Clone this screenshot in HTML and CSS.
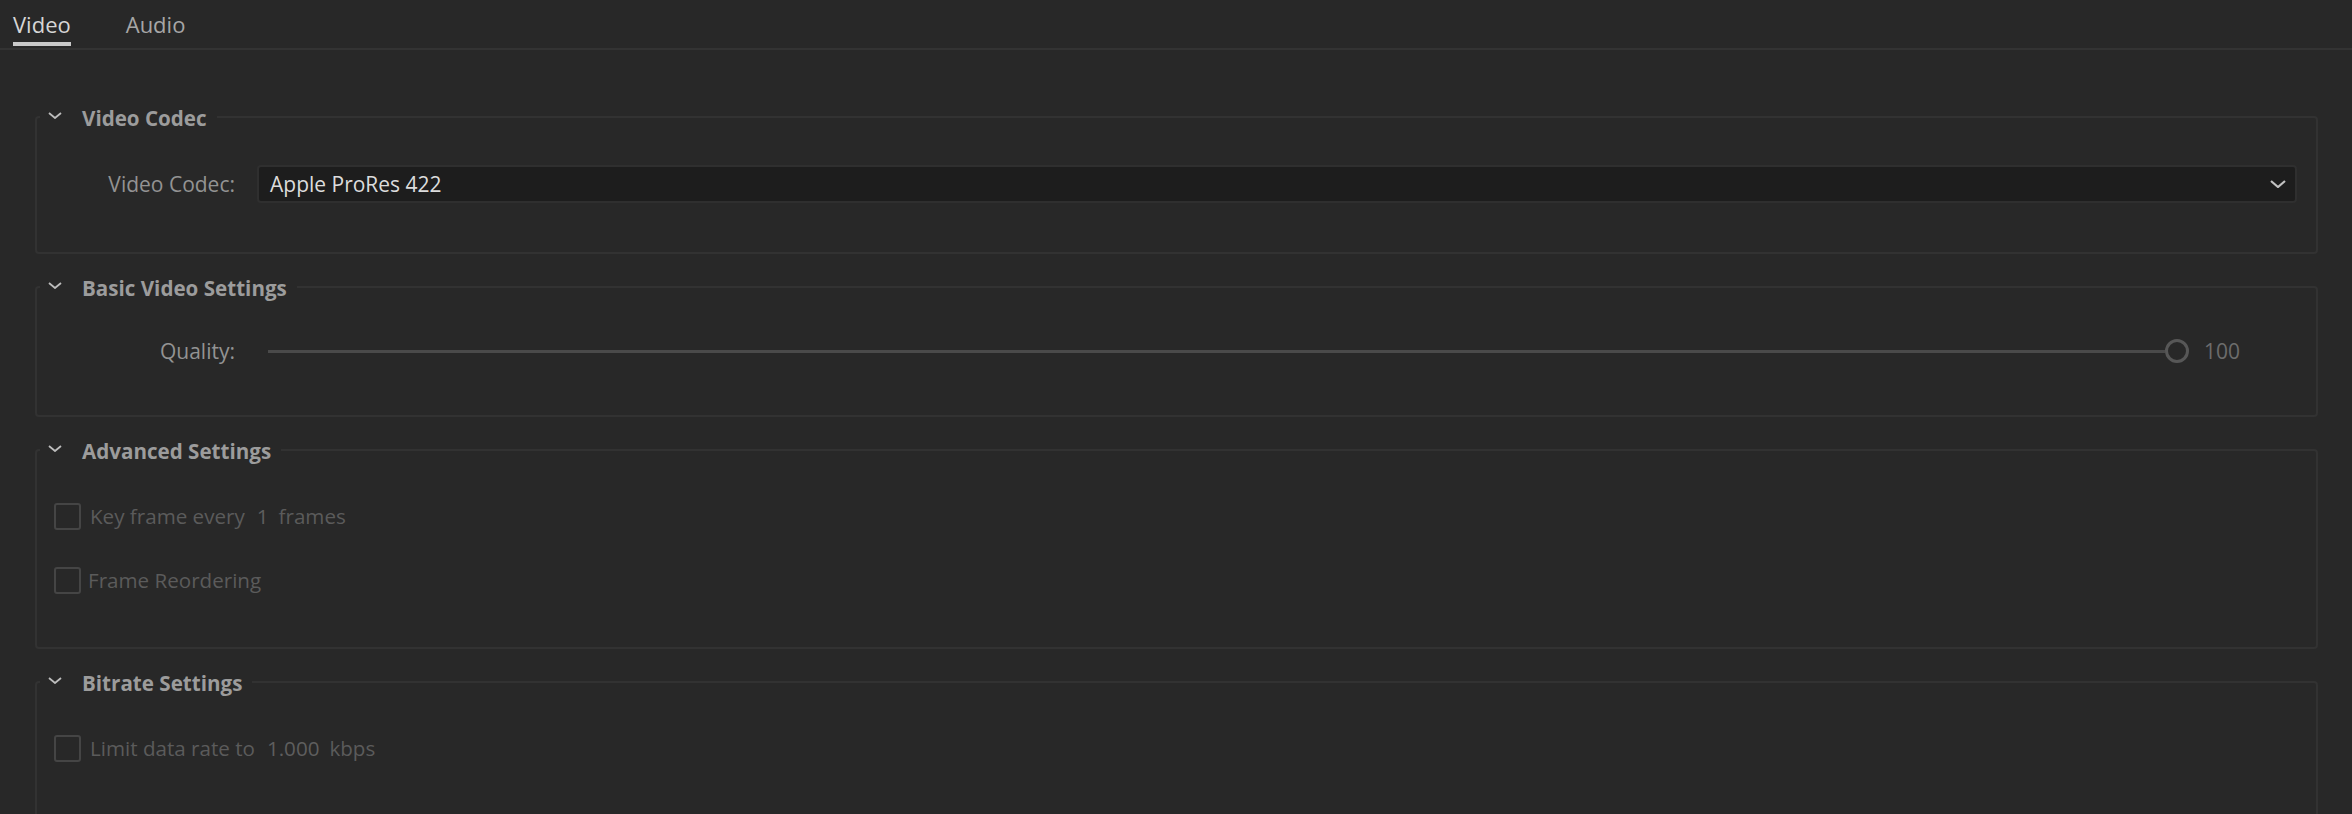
FILE: index.html
```html
<!DOCTYPE html>
<html lang="en">
<head>
<meta charset="utf-8">
<title>Export Settings</title>
<link rel="stylesheet" href="styles.css">
</head>
<body>
<div class="panel">
  <nav class="tabs">
    <div class="tab active">Video</div>
    <div class="tab">Audio</div>
  </nav>
  <div class="content">
    <fieldset class="group g-codec">
      <legend class="group-title">
        <svg class="chev" viewBox="0 0 14 7" width="14" height="7"><path d="M1 1 L7 6 L13 1" /></svg>
        <span>Video Codec</span>
      </legend>
      <div class="field-row">
        <label class="field-label">Video Codec:</label>
        <div class="select">
          <span class="select-value">Apple ProRes 422</span>
          <svg class="select-chev" viewBox="0 0 16 8" width="16" height="8"><path d="M1 1 L8 7 L15 1" /></svg>
        </div>
      </div>
    </fieldset>

    <fieldset class="group g-basic">
      <legend class="group-title">
        <svg class="chev" viewBox="0 0 14 7" width="14" height="7"><path d="M1 1 L7 6 L13 1" /></svg>
        <span>Basic Video Settings</span>
      </legend>
      <div class="field-row slider-row">
        <label class="field-label">Quality:</label>
        <div class="slider">
          <div class="track"></div>
          <div class="thumb"></div>
          <span class="slider-value">100</span>
        </div>
      </div>
    </fieldset>

    <fieldset class="group g-advanced">
      <legend class="group-title">
        <svg class="chev" viewBox="0 0 14 7" width="14" height="7"><path d="M1 1 L7 6 L13 1" /></svg>
        <span>Advanced Settings</span>
      </legend>
      <div class="check-list">
        <div class="check-row">
          <span class="checkbox"></span>
          <span class="check-text">Key frame every</span>
          <span class="num">1</span>
          <span class="unit">frames</span>
        </div>
        <div class="check-row">
          <span class="checkbox"></span>
          <span class="check-text tight">Frame Reordering</span>
        </div>
      </div>
    </fieldset>

    <fieldset class="group g-bitrate">
      <legend class="group-title">
        <svg class="chev" viewBox="0 0 14 7" width="14" height="7"><path d="M1 1 L7 6 L13 1" /></svg>
        <span>Bitrate Settings</span>
      </legend>
      <div class="check-list">
        <div class="check-row">
          <span class="checkbox"></span>
          <span class="check-text">Limit data rate to</span>
          <span class="num">1.000</span>
          <span class="unit">kbps</span>
        </div>
      </div>
    </fieldset>
  </div>
</div>
</body>
</html>
```

FILE: styles.css
```css
* { box-sizing: border-box; }

html, body {
  margin: 0;
  padding: 0;
  background: #282828;
  height: 100%;
  overflow: hidden;
}

body {
  font-family: "Open Sans", "Noto Sans", "Liberation Sans", sans-serif;
  font-size: 21px;
  color: #9a9a9a;
}

.panel {
  display: flex;
  flex-direction: column;
}

.tabs {
  display: flex;
  gap: 55px;
  height: 50px;
  padding-left: 13px;
  border-bottom: 2px solid #333333;
}

.tab {
  height: 46px;
  padding-top: 6px;
  line-height: 36px;
  font-size: 22px;
  color: #a6a6a6;
  border-bottom: 4px solid transparent;
}

.tab.active {
  color: #d6d6d6;
  border-bottom-color: #c9c9c9;
}

.content {
  display: flex;
  flex-direction: column;
  padding-top: 54px;
}

.group {
  margin: 0 34px 20px 35px;
  border: 2px solid #323232;
  border-radius: 4px;
  padding: 0;
  min-width: 0;
}

.group-title {
  display: flex;
  align-items: center;
  height: 26px;
  margin-left: 3px;
  padding: 0 10px 0 8px;
  font-size: 20.6px;
  font-weight: 700;
  color: #9c9c9c;
  line-height: 26px;
}

.group-title span {
  padding-top: 2px;
}

.chev {
  width: 14px;
  height: 7px;
  margin-right: 20px;
  margin-top: -4px;
  fill: none;
  stroke: #bdbdbd;
  stroke-width: 1.8;
}

.g-codec { padding: 35px 0 49px; }
.g-basic { padding: 36px 0 49px; }
.g-advanced { padding: 39px 0 53px; }
.g-bitrate { padding: 39px 0 53px; }

.field-row {
  display: grid;
  grid-template-columns: 198px 1fr;
  column-gap: 22px;
  align-items: center;
  padding-right: 19px;
}

.field-label {
  text-align: right;
  color: #939393;
  white-space: nowrap;
}

.select {
  display: flex;
  align-items: center;
  justify-content: space-between;
  height: 38px;
  padding: 0 9px 0 11px;
  background: #1d1d1d;
  border: 2px solid #2f2f2f;
  border-radius: 4px;
}

.select-value {
  color: #dcdcdc;
}

.select-chev {
  fill: none;
  stroke: #c2c2c2;
  stroke-width: 2.2;
}

.slider-row { height: 30px; }

.slider {
  display: flex;
  align-items: center;
  height: 30px;
  padding-left: 11px;
}

.track {
  flex: 1;
  height: 3px;
  background: #4a4a4a;
}

.thumb {
  width: 24px;
  height: 24px;
  border: 3.5px solid #575757;
  border-radius: 50%;
}

.slider-value {
  width: 93px;
  margin-left: 15px;
  color: #6c6c6c;
}

.check-list {
  display: flex;
  flex-direction: column;
  gap: 36px;
  padding-left: 17px;
}

.check-row {
  display: flex;
  align-items: center;
  height: 28px;
  font-size: 20.6px;
  color: #5b5b5b;
}

.checkbox {
  width: 27px;
  height: 27px;
  border: 2px solid #454545;
  border-radius: 3px;
  flex: none;
}

.check-text { margin-left: 9px; }
.check-text.tight { margin-left: 7px; }

.num { margin-left: 12px; color: #5e5e5e; }
.unit { margin-left: 10px; }
```
